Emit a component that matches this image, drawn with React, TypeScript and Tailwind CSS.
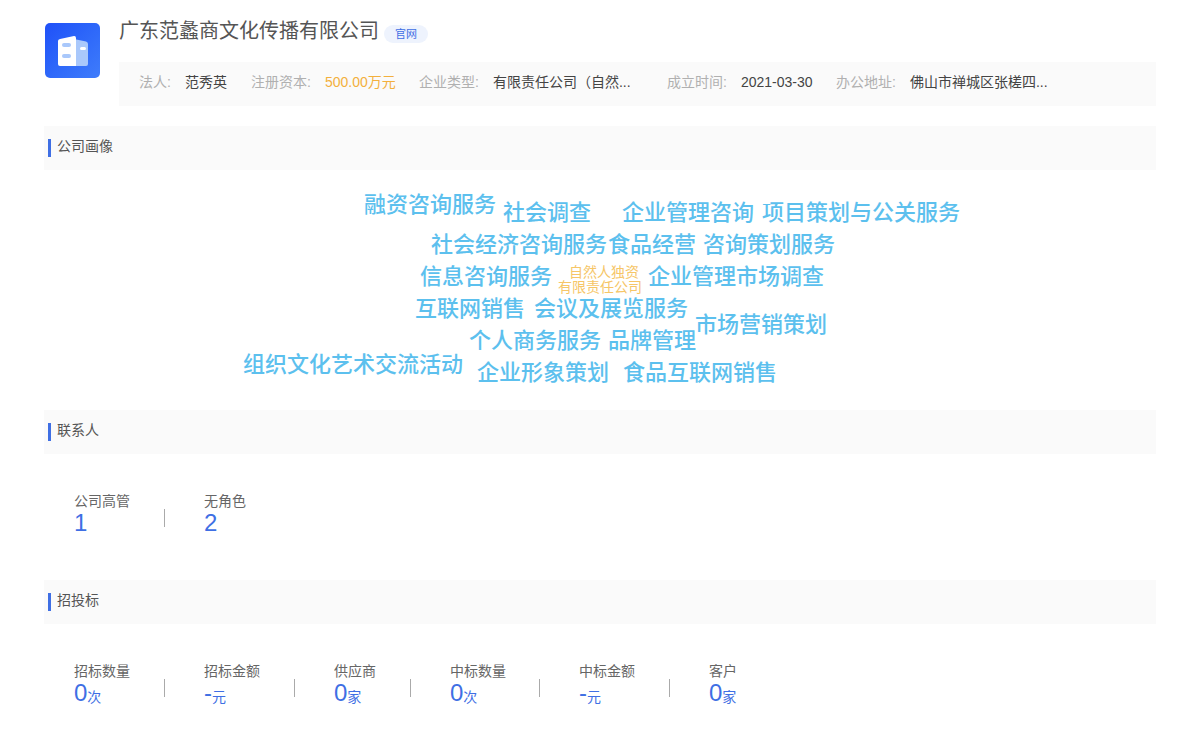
const sans = "font-['Liberation_Sans','Noto_Sans_CJK_SC',sans-serif]";

const infoItems = [
  { label: "法人:", value: "范秀英", width: "w-[112px]" },
  { label: "注册资本:", value: "500.00万元", width: "w-[168px]", orange: true },
  { label: "企业类型:", value: "有限责任公司（自然...", width: "w-[248px]" },
  { label: "成立时间:", value: "2021-03-30", width: "w-[169px]" },
  { label: "办公地址:", value: "佛山市禅城区张槎四...", width: "w-[240px]" },
];

const cloudWords = [
  { text: "融资咨询服务", x: 364, y: 21 },
  { text: "社会调查", x: 503, y: 29 },
  { text: "企业管理咨询", x: 622, y: 29 },
  { text: "项目策划与公关服务", x: 762, y: 29 },
  { text: "社会经济咨询服务", x: 431, y: 61 },
  { text: "食品经营", x: 608, y: 61 },
  { text: "咨询策划服务", x: 703, y: 61 },
  { text: "信息咨询服务", x: 420, y: 93 },
  { text: "企业管理市场调查", x: 648, y: 93 },
  { text: "互联网销售", x: 415, y: 125 },
  { text: "会议及展览服务", x: 534, y: 125 },
  { text: "市场营销策划", x: 695, y: 141 },
  { text: "个人商务服务", x: 469, y: 157 },
  { text: "品牌管理", x: 608, y: 157 },
  { text: "组织文化艺术交流活动", x: 243, y: 181 },
  { text: "企业形象策划", x: 477, y: 189 },
  { text: "食品互联网销售", x: 623, y: 189 },
];

function SectionTitle({ title }: { title: string }) {
  return (
    <div className="flex h-11 items-center bg-[#fafafa] pl-1">
      <span className="h-[18px] w-[3px] bg-[#3f6fe4]" />
      <h2 className="mb-1 ml-[6px] text-[14px] leading-5 text-[#555]">{title}</h2>
    </div>
  );
}

function Stat({ label, value, unit, width, last }: { label: string; value: string; unit?: string; width: string; last?: boolean }) {
  return (
    <div className={`relative ${width}`}>
      <div className="text-[14px] leading-[18px] text-[#666]">{label}</div>
      <div className="flex h-[26px] items-end leading-[26px] text-[#3f6fe4]">
        <span className="text-[24px] leading-[26px]">{value}</span>
        {unit && <span className="mb-[-1px] text-[14px] leading-5">{unit}</span>}
      </div>
      {!last && <span className="absolute right-[39px] top-[17px] h-[18px] w-px bg-[#aaa]" />}
    </div>
  );
}

export default function App() {
  return (
    <div className={`${sans} h-[752px] w-[1200px] overflow-hidden bg-white pl-[44px] pr-[44px]`}>
      {/* header */}
      <div className="flex pt-[18px]">
        <div className="ml-px mt-[5px] flex size-[55px] items-center justify-center rounded-[5px] bg-gradient-to-br from-[#2050f8] to-[#3f7cfb]">
          <svg width="32" height="32" viewBox="0 0 32 32">
            <path d="M17 4 L29 6.5 Q31 7 31 9 V29 Q31 31 29 31 H17 Z" fill="#a9c8fb" />
            <path d="M1 6 Q1 4.5 3 4 L17 1 Q19 0.8 19 3 V31 H3 Q1 31 1 29 Z" fill="#fff" />
            <rect x="5" y="8" width="9" height="4" rx="2" fill="#a9c8fb" />
            <rect x="5" y="19" width="9" height="4" rx="2" fill="#a9c8fb" />
            <rect x="23" y="12" width="6" height="3" rx="1.5" fill="#fff" />
          </svg>
        </div>
        <div className="ml-[19px] flex-1">
          <div className="flex h-[26px] items-center">
            <h1 className="text-[20px] leading-[26px] text-[#555]">广东范蠡商文化传播有限公司</h1>
            <span className="ml-[5px] mt-[6px] flex h-[18px] w-[44px] items-center justify-center rounded-full bg-[#eef3fd] text-[11px] text-[#3f6fe4]">官网</span>
          </div>
          <div className="mt-[18px] flex h-11 items-center bg-[#fafafa] pb-1 pl-5 text-[14px]">
            {infoItems.map((item) => (
              <div key={item.label} className={`flex shrink-0 ${item.width}`}>
                <span className="mr-[14px] text-[#b0b0b0]">{item.label}</span>
                <span className={item.orange ? "text-[#f3b03d]" : "text-[#444]"}>{item.value}</span>
              </div>
            ))}
          </div>
        </div>
      </div>

      {/* 公司画像 */}
      <div className="mt-5">
        <SectionTitle title="公司画像" />
        <div className="relative -ml-[44px] h-[240px] w-[1200px]">
          {cloudWords.map((w) => (
            <span
              key={w.text}
              className="absolute whitespace-nowrap text-[22px] font-medium leading-[28px] text-[#5cc0ee]"
              style={{ left: w.x, top: w.y }}
            >
              {w.text}
            </span>
          ))}
          <div className="absolute left-[556px] top-[95px] w-[88px] text-center text-[14px] leading-[15px] text-[#f6c667]">
            <div className="pl-2">自然人独资</div>
            <div>有限责任公司</div>
          </div>
        </div>
      </div>

      {/* 联系人 */}
      <SectionTitle title="联系人" />
      <div className="flex h-[126px] pl-[30px] pt-[38px]">
        <Stat label="公司高管" value="1" width="w-[130px]" />
        <Stat label="无角色" value="2" width="w-[130px]" last />
      </div>

      {/* 招投标 */}
      <SectionTitle title="招投标" />
      <div className="flex pl-[30px] pt-[38px]">
        <Stat label="招标数量" value="0" unit="次" width="w-[130px]" />
        <Stat label="招标金额" value="-" unit="元" width="w-[130px]" />
        <Stat label="供应商" value="0" unit="家" width="w-[116px]" />
        <Stat label="中标数量" value="0" unit="次" width="w-[129px]" />
        <Stat label="中标金额" value="-" unit="元" width="w-[130px]" />
        <Stat label="客户" value="0" unit="家" width="w-[130px]" last />
      </div>
    </div>
  );
}
